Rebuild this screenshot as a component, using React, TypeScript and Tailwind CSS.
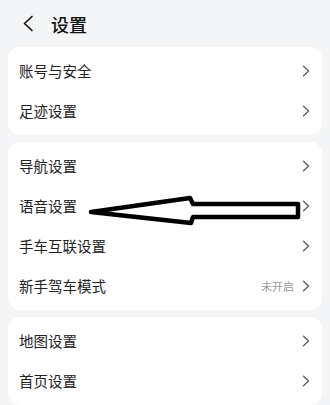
import React from "react";

const Chevron = () => (
  <svg width="8" height="12" viewBox="0 0 8 12" className="shrink-0">
    <path d="M1.5 1.2 L6.6 6 L1.5 10.8" fill="none" stroke="#5c5c5c" strokeWidth="1.3" strokeLinecap="round" strokeLinejoin="round" />
  </svg>
);

type Row = { label: string; value?: string };

const Card = ({ rows }: { rows: Row[] }) => (
  <div className="mx-2 bg-white rounded-xl py-1">
    {rows.map((r) => (
      <div key={r.label} className="h-10 flex items-center pl-[11px] pr-[12px]">
        <span className="flex-1 text-[14.5px] text-[#222] leading-none">{r.label}</span>
        {r.value && <span className="text-[11px] text-[#9a9a9a] mr-[8px] leading-none">{r.value}</span>}
        <Chevron />
      </div>
    ))}
  </div>
);

export default function App() {
  return (
    <div
      className="relative w-[330px] h-[405px] overflow-hidden bg-[#f4f5f7]"
      style={{ fontFamily: '"Noto Sans CJK SC", "Noto Sans", sans-serif' }}
    >
      <div className="h-[47px] flex items-center pl-[22px]">
        <svg width="12" height="17" viewBox="0 0 12 17">
          <path d="M10 1.5 L2.5 8.5 L10 15.5" fill="none" stroke="#111" strokeWidth="1.7" strokeLinecap="round" strokeLinejoin="round" />
        </svg>
        <span className="ml-[17px] text-[18px] font-medium text-[#111] leading-none">设置</span>
      </div>
      <div className="flex flex-col gap-[7px]">
        <Card rows={[{ label: "账号与安全" }, { label: "足迹设置" }]} />
        <Card
          rows={[
            { label: "导航设置" },
            { label: "语音设置" },
            { label: "手车互联设置" },
            { label: "新手驾车模式", value: "未开启" },
          ]}
        />
        <Card rows={[{ label: "地图设置" }, { label: "首页设置" }]} />
      </div>
      <svg className="absolute left-0 top-0 pointer-events-none" width="330" height="405" viewBox="0 0 330 405">
        <path
          d="M91 212 L190 198 L193 204 L298 204 L298 217 L193 217 L191 223 Z"
          fill="none"
          stroke="#000"
          strokeWidth="4.5"
          strokeLinejoin="round"
        />
      </svg>
    </div>
  );
}
